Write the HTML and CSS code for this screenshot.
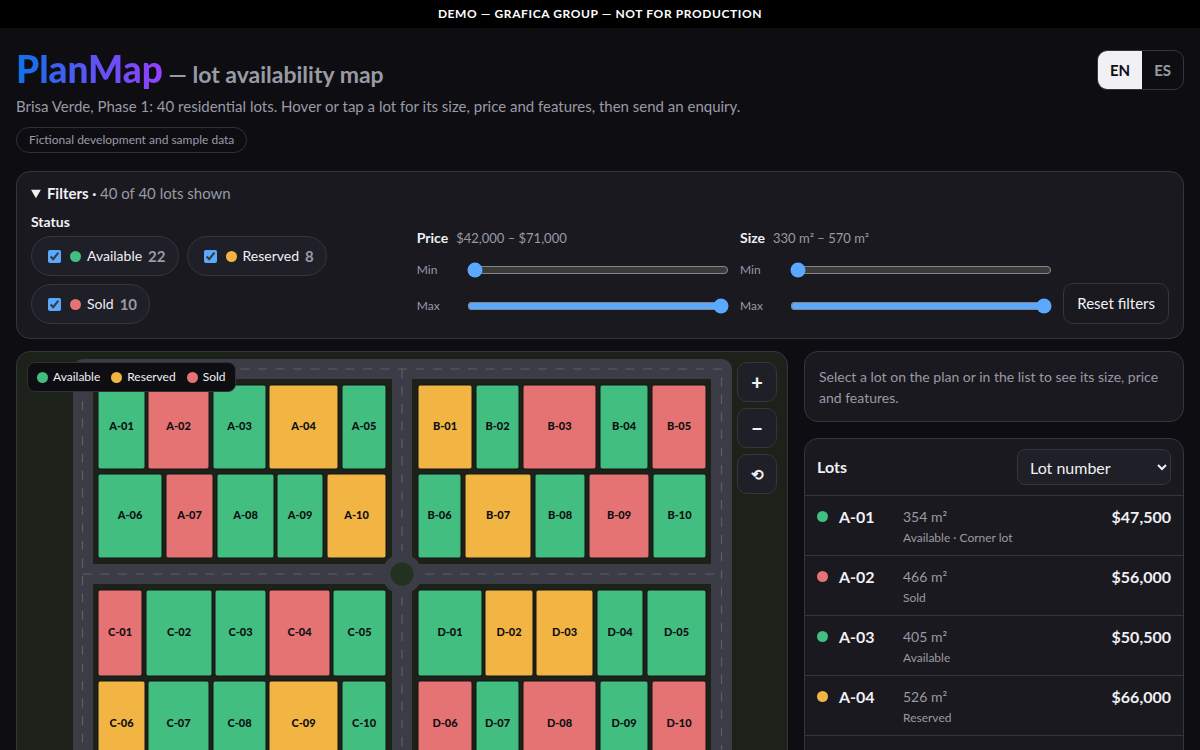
FILE: index.html
```html
<!DOCTYPE html>
<html lang="en">
<head>
<meta charset="utf-8">
<meta name="viewport" content="width=device-width, initial-scale=1">
<title>PlanMap — lot availability map</title>
<link rel="stylesheet" href="styles.css">
</head>
<body>
<div class="banner">DEMO — GRAFICA GROUP — NOT FOR PRODUCTION</div>
<div class="page">
  <header class="header">
    <div class="intro">
      <h1 class="title"><span class="brand">PlanMap</span> <span class="tagline">— lot availability map</span></h1>
      <p class="lead">Brisa Verde, Phase 1: 40 residential lots. Hover or tap a lot for its size, price and features, then send an enquiry.</p>
      <span class="tag">Fictional development and sample data</span>
    </div>
    <div class="lang" role="group" aria-label="Language">
      <button type="button" class="lang-btn is-active">EN</button>
      <button type="button" class="lang-btn">ES</button>
    </div>
  </header>

  <details class="card filters" open>
    <summary class="summary">Filters · <span class="muted">40 of 40 lots shown</span></summary>
    <div class="filter-grid">
      <fieldset class="status">
        <legend class="label">Status</legend>
        <div class="pills">
          <label class="pill"><input type="checkbox" checked><span class="dot available"></span>Available <b>22</b></label>
          <label class="pill"><input type="checkbox" checked><span class="dot reserved"></span>Reserved <b>8</b></label>
          <label class="pill"><input type="checkbox" checked><span class="dot sold"></span>Sold <b>10</b></label>
        </div>
      </fieldset>
      <div class="range-group">
        <div class="range-head"><span class="label">Price</span><span>$42,000 – $71,000</span></div>
        <label class="range"><span>Min</span><input type="range" min="42000" max="71000" value="42000"></label>
        <label class="range"><span>Max</span><input type="range" min="42000" max="71000" value="71000"></label>
      </div>
      <div class="range-group">
        <div class="range-head"><span class="label">Size</span><span>330 m² – 570 m²</span></div>
        <label class="range"><span>Min</span><input type="range" min="330" max="570" value="330"></label>
        <label class="range"><span>Max</span><input type="range" min="330" max="570" value="570"></label>
      </div>
      <button type="button" class="reset">Reset filters</button>
    </div>
  </details>

  <main class="main">
    <section class="map">
      <svg class="plan" viewBox="17 352 770 444" role="img" aria-label="Site plan">
        <rect class="road" x="73" y="359" width="659" height="430" rx="10"/>
        <g class="block">
          <rect x="93" y="379" width="299" height="185"/>
          <rect x="412" y="379" width="299" height="185"/>
          <rect x="93" y="584" width="299" height="185"/>
          <rect x="412" y="584" width="299" height="185"/>
        </g>
        <circle class="road" cx="402" cy="574" r="20"/>
        <path class="dash" d="M83 369H722M721.5 377.5V780M82.5 383.5V780M83 779H722M402 369V551M402 597V779M83 574H379M425 574H721"/>
        <circle class="island" cx="402" cy="574" r="11.5"/>
        <g id="lots"></g>
      </svg>
      <div class="legend">
        <span><i class="dot available"></i>Available</span>
        <span><i class="dot reserved"></i>Reserved</span>
        <span><i class="dot sold"></i>Sold</span>
      </div>
      <div class="zoom">
        <button type="button" aria-label="Zoom in">+</button>
        <button type="button" aria-label="Zoom out">−</button>
        <button type="button" class="zoom-reset" aria-label="Reset view">⟲</button>
      </div>
    </section>

    <aside class="side">
      <p class="card hint">Select a lot on the plan or in the list to see its size, price and features.</p>
      <section class="card list">
        <div class="list-head">
          <h2><label for="sort">Lots</label></h2>
          <select id="sort"><option>Lot number</option><option>Price</option><option>Size</option></select>
        </div>
        <ul class="rows">
          <li><button type="button" class="row"><i class="dot available"></i><b>A-01</b><span class="info"><span>354 m²</span><small>Available · Corner lot</small></span><b>$47,500</b></button></li>
          <li><button type="button" class="row"><i class="dot sold"></i><b>A-02</b><span class="info"><span>466 m²</span><small>Sold</small></span><b>$56,000</b></button></li>
          <li><button type="button" class="row"><i class="dot available"></i><b>A-03</b><span class="info"><span>405 m²</span><small>Available</small></span><b>$50,500</b></button></li>
          <li><button type="button" class="row"><i class="dot reserved"></i><b>A-04</b><span class="info"><span>526 m²</span><small>Reserved</small></span><b>$66,000</b></button></li>
          <li><button type="button" class="row"><i class="dot available"></i><b>A-05</b><span class="info"><span>338 m²</span><small>Available</small></span><b>$46,000</b></button></li>
        </ul>
      </section>
    </aside>
  </main>
</div>
<script src="app.js"></script>
</body>
</html>
```
FILE: styles.css
```css
* { box-sizing: border-box; }
body {
  margin: 0;
  background: #0e0e12;
  color: #f0f0f5;
  color-scheme: dark;
  font: 16px/24px Lato, "Open Sans", sans-serif;
}
button, select { font: inherit; color: inherit; cursor: pointer; }
.banner {
  background: #000;
  color: #fff;
  font-size: 12px;
  font-weight: 700;
  line-height: 20px;
  letter-spacing: 0.05em;
  padding: 4px 16px;
  text-align: center;
}
.page { padding: 22px 16px 24px; }
.header { display: flex; justify-content: space-between; align-items: flex-start; gap: 16px; margin-bottom: 18px; }
.title { margin: 0; font-size: 23px; line-height: 38px; font-weight: 700; }
.brand {
  font-size: 37px;
  font-weight: 900;
  background: linear-gradient(90deg, #0f72ea, #5a55f5 50%, #9340ff);
  -webkit-background-clip: text;
  background-clip: text;
  color: transparent;
}
.tagline, .muted, .lead, .tag, .hint { color: #9a9aa5; }
.lead { margin: 1px 0 8px; font-size: 15px; }
.tag {
  display: inline-block;
  border: 1px solid #303037;
  border-radius: 999px;
  padding: 2px 12px;
  font-size: 12px;
  line-height: 20px;
}
.lang { display: flex; border: 1px solid #35353c; border-radius: 10px; overflow: hidden; }
.lang-btn { border: 0; background: none; color: #9a9aa5; font-size: 15px; font-weight: 700; padding: 7px 12px; line-height: 24px; }
.lang-btn.is-active { background: #f0f0f5; color: #0e0e12; }
.card { background: #19191f; border: 1px solid #35353c; border-radius: 14px; }
.filters { padding: 9px 14px 14px; margin-bottom: 12px; }
.summary { font-size: 15px; font-weight: 700; line-height: 24px; }
.muted { font-weight: 400; }
.filter-grid {
  display: grid;
  grid-template-columns: 6fr 5fr 5fr auto;
  gap: 11px;
  align-items: end;
  margin-top: 7px;
}
.status { border: 0; padding: 0; margin: 0; min-width: 0; }
.label { color: #f0f0f5; font-size: 14px; font-weight: 700; line-height: 20px; padding: 0; }
.pills { display: flex; flex-wrap: wrap; gap: 8px; margin-top: 4px; }
.pill {
  display: flex;
  align-items: center;
  gap: 6px;
  min-height: 40px;
  padding: 0 12px 0 16px;
  background: #1f1f27;
  border: 1px solid #35353c;
  border-radius: 999px;
  font-size: 14px;
}
.pill b { color: #9a9aa5; font-size: 15px; }
.pill input { margin: 0 3px 0 0; accent-color: #5aa9ff; }
.dot { display: inline-block; flex: none; width: 11px; height: 11px; border-radius: 50%; }
.available { background: #41be80; fill: #41be80; }
.reserved { background: #f2b544; fill: #f2b544; }
.sold { background: #e57373; fill: #e57373; }
.range-head { display: flex; gap: 8px; font-size: 13px; line-height: 20px; color: #9a9aa5; margin-bottom: 4px; }
.range {
  display: grid;
  grid-template-columns: 48px 1fr;
  align-items: center;
  height: 36px;
  font-size: 12px;
  color: #9a9aa5;
}
.range input { width: auto; min-width: 0; margin: 2px 0 2px 2px; accent-color: #5aa9ff; }
.reset { background: none; border: 1px solid #35353c; border-radius: 10px; padding: 8px 13px; font-size: 15px; line-height: 23px; }
.main { display: grid; grid-template-columns: minmax(0, 1fr) 380px; gap: 16px; align-items: start; }
.map { position: relative; background: #1c2119; border: 1px solid #35353c; border-radius: 14px; overflow: hidden; }
.plan { display: block; width: 100%; height: auto; }
.road { fill: #3b3c46; }
.block { fill: #1c2119; }
.island { fill: #23311f; }
.dash { fill: none; stroke: #5d5e68; stroke-width: 1.2; stroke-dasharray: 9 8.5; }
.lot rect { stroke: #111612; stroke-width: 1; }
.lot text { fill: #0e0e12; font-size: 11px; font-weight: 900; text-anchor: middle; }
.legend {
  position: absolute;
  top: 10px;
  left: 10px;
  display: flex;
  gap: 11px;
  padding: 4px 9px;
  background: #0e0e12;
  border: 1px solid #303037;
  border-radius: 8px;
  font-size: 12px;
  line-height: 20px;
}
.legend span { display: flex; align-items: center; gap: 5px; }
.zoom { position: absolute; top: 10px; right: 10px; display: grid; gap: 6px; }
.zoom button {
  width: 40px;
  height: 40px;
  padding: 0;
  background: #1f1f27;
  border: 1px solid #35353c;
  border-radius: 10px;
  font-size: 20px;
  font-weight: 900;
}
.zoom .zoom-reset { font-size: 15px; }
.side { display: grid; gap: 16px; }
.hint { margin: 0; padding: 14px 14px 13px; font-size: 14px; line-height: 21px; }
.list { overflow: hidden; }
.list-head {
  display: flex;
  align-items: center;
  justify-content: space-between;
  padding: 10px 12px;
  border-bottom: 1px solid #35353c;
}
.list-head h2 { margin: 0; font-size: 16px; font-weight: 700; }
.list-head select { width: 154px; height: 36px; padding: 0 8px; background: #1f1f27; border: 1px solid #35353c; border-radius: 8px; }
.rows { list-style: none; margin: 0; padding: 0; }
.row {
  display: grid;
  grid-template-columns: 11px 53px 1fr auto;
  column-gap: 11px;
  width: 100%;
  padding: 9px 12px 8px;
  background: none;
  border: 0;
  border-bottom: 1px solid #35353c;
  text-align: left;
  line-height: 24px;
}
.row .dot { margin-top: 6px; }
.info { display: grid; color: #9a9aa5; font-size: 14px; }
.info small { font-size: 12px; line-height: 18px; }
```
FILE: app.js
```js
// Each row: block letter, first lot number, top, height, then [left, right, status] per lot.
const rows = [
  ["A", 1, 385, 84, [[98, 145, "a"], [148, 209, "s"], [213, 266, "a"], [269, 338, "r"], [342, 386, "a"]]],
  ["A", 6, 474, 84, [[98, 162, "a"], [166, 213, "s"], [217, 274, "a"], [277, 323, "a"], [327, 386, "r"]]],
  ["B", 1, 385, 84, [[418, 472, "r"], [476, 519, "a"], [523, 596, "s"], [600, 648, "a"], [652, 706, "s"]]],
  ["B", 6, 474, 84, [[418, 461, "a"], [465, 531, "r"], [535, 585, "a"], [589, 649, "s"], [653, 706, "a"]]],
  ["C", 1, 590, 86, [[98, 142, "s"], [146, 212, "a"], [215, 266, "a"], [269, 330, "s"], [333, 386, "a"]]],
  ["C", 6, 681, 86, [[98, 145, "r"], [148, 209, "a"], [213, 266, "a"], [269, 338, "r"], [342, 386, "a"]]],
  ["D", 1, 590, 86, [[418, 482, "a"], [485, 533, "r"], [536, 593, "r"], [597, 643, "a"], [647, 706, "a"]]],
  ["D", 6, 681, 86, [[418, 472, "s"], [476, 519, "a"], [523, 596, "s"], [600, 648, "a"], [652, 706, "s"]]]
];
const names = { a: "available", r: "reserved", s: "sold" };
document.getElementById("lots").innerHTML = rows.map(([block, first, top, height, lots]) =>
  lots.map(([left, right, status], i) => {
    const id = block + "-" + String(first + i).padStart(2, "0");
    return `<g class="lot"><rect class="${names[status]}" x="${left}" y="${top}" width="${right - left}" height="${height}" rx="2"/>` +
      `<text x="${(left + right) / 2}" y="${top + height / 2 + 3}">${id}</text></g>`;
  }).join("")
).join("");
```
